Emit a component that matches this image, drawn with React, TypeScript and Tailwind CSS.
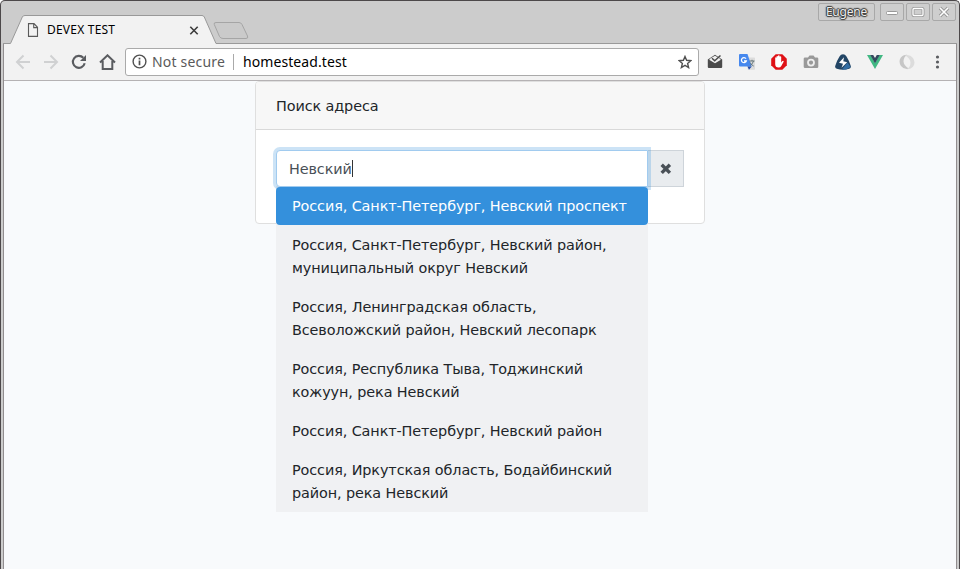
import React from 'react';

const suggestions = [
  ['Россия, Санкт-Петербург, Невский проспект'],
  ['Россия, Санкт-Петербург, Невский район,', 'муниципальный округ Невский'],
  ['Россия, Ленинградская область,', 'Всеволожский район, Невский лесопарк'],
  ['Россия, Республика Тыва, Тоджинский', 'кожуун, река Невский'],
  ['Россия, Санкт-Петербург, Невский район'],
  ['Россия, Иркутская область, Бодайбинский', 'район, река Невский'],
];

function WindowButton({ children }: { children: React.ReactNode }) {
  return (
    <div className="flex h-[18px] w-6 items-center justify-center rounded-[2px] border border-[#a8a8a8] bg-[#cecece]">
      {children}
    </div>
  );
}

function TitleBar() {
  return (
    <div className="relative flex h-[42px] items-start justify-between">
      <svg className="absolute left-0 top-0" width="958" height="43" viewBox="1 1 958 43" fill="none">
        <path d="M3 43.5H10.5L22.3 17Q23 15.5 25 15.5H202Q203.500 15.500 204.300 17L216 43.500H957V45H3Z" fill="#f2f2f2" />
        <path d="M3 43.500H10.500L22.300 17Q23 15.500 25 15.500H202Q203.500 15.500 204.300 17L216 43.500H957" stroke="#999" />
        <path d="M216 22.500H239Q241 22.500 242 24.500L247.500 36Q248.500 38.500 246 38.500H223Q220.500 38.500 219.500 36.500L214.300 24.500Q213.500 22.500 216 22.500Z" fill="#cacaca" stroke="#a5a5a5" />
      </svg>
      <div className="relative ml-[26px] mt-[19px] flex h-5 w-[175px] items-center">
        <svg width="12" height="14" viewBox="0 0 12 14" fill="none" stroke="#5a5a5a" strokeWidth="1.1">
          <path d="M1.500 .6H7L10.500 4.300V13.400H1.500ZM6.700 .6V4.600H10.500" />
        </svg>
        <span className="ml-2 text-[12px] tracking-[0.22px] text-black">DEVEX TEST</span>
        <svg className="ml-auto mr-[3px]" width="10" height="9" viewBox="0 0 10 9" stroke="#3c3c3c" strokeWidth="1.6">
          <path d="M1.300.8 8.700 8.200M8.700.8 1.300 8.200" />
        </svg>
      </div>
      <div className="relative mr-[3px] mt-[2px] flex gap-[2px]">
        <div className="mr-[3px] flex h-[18px] w-[57px] items-center justify-center rounded-[2px] border border-[#a8a8a8] bg-[#cecece] text-[12px] leading-none tracking-[-0.2px] text-[#eeeeee] [text-shadow:0_0_1px_#333,0_0_2px_#333,1px_0_1px_#444,-1px_0_1px_#444,0_1px_1px_#444,0_-1px_1px_#444]">
          Eugene
        </div>
        <WindowButton>
          <svg width="14" height="12" viewBox="0 0 14 12"><rect x="1.500" y="5.500" width="11" height="3" rx="1" fill="#fff" stroke="#999" /></svg>
        </WindowButton>
        <WindowButton>
          <svg width="14" height="12" viewBox="0 0 14 12" fill="none"><rect x="2" y="2.500" width="10" height="7" rx="1" stroke="#999" strokeWidth="3" /><rect x="2" y="2.500" width="10" height="7" rx="1" stroke="#fff" strokeWidth="1.3" /></svg>
        </WindowButton>
        <WindowButton>
          <svg width="14" height="12" viewBox="0 0 14 12" fill="none"><path d="m3 2 8 8m0-8-8 8" stroke="#999" strokeWidth="3.500" /><path d="m3 2 8 8m0-8-8 8" stroke="#fff" strokeWidth="1.600" /></svg>
        </WindowButton>
      </div>
    </div>
  );
}

function Arrow({ flip = false }: { flip?: boolean }) {
  return (
    <svg className={flip ? 'rotate-180' : ''} width="16" height="16" viewBox="0 0 16 16" fill="none" stroke="#d0d1d2" strokeWidth="2">
      <path d="M15 8H2.500M8.500 1.500 2 8l6.500 6.500" />
    </svg>
  );
}

function Extensions() {
  return (
    <div className="flex items-center gap-4">
      <svg width="16" height="16" viewBox="0 0 16 16">
        <path d="M.8 5.500 8 .7l7.200 4.800V13q0 1-1 1H1.800q-1 0-1-1Z" fill="#4b4b4b" />
        <path d="M2.500 6V5L8 1.800 13.500 5v1L8 9.300Z" fill="#f2f2f2" />
        <path d="m5 4.300 2.700 2.500L13.500 1.500" fill="none" stroke="#4b4b4b" strokeWidth="1.500" />
      </svg>
      <svg width="16" height="16" viewBox="0 0 16 16">
        <path d="M6 3.500h9.300q.7 0 .7.700V15q0 .7-.7.700H9Z" fill="#dcdcdc" />
        <path d="M0 1Q0 0 1 0h7.500l4.200 12.500H1q-1 0-1-1Z" fill="#4688ee" />
        <path d="M8.500 12.500h4.200L10 15.800Z" fill="#244dad" />
        <path d="M7 4.700a2.500 2.500 0 1 0 .3 2.300H5" fill="none" stroke="#fff" strokeWidth="1.300" />
        <path d="M10.500 7h5M13 5.800V7m1.500 0q-.8 3-3.200 4.500m-.3-3q1.500 2.500 3.700 3.600" fill="none" stroke="#66777b" />
      </svg>
      <svg width="16" height="16" viewBox="0 0 16 16">
        <path d="M4.700.2h6.600l4.500 4.500v6.600l-4.500 4.500H4.700L.2 11.300V4.700Z" fill="#df1116" />
        <path d="M4.200 8V4q0-.7.600-.7t.7.700V2.700q0-.8.700-.8t.8.800V2q0-.8.800-.8t.8.800v1q0-.8.800-.8t.8.800v5.600l1.200-1.500q.6-.6 1.100-.1.400.400 0 1L10.300 12q-.9 1.600-2.700 1.600-3.400 0-3.400-3.500Z" fill="#fff" />
      </svg>
      <svg width="16" height="16" viewBox="0 0 16 16">
        <path d="M2 3.500h3L6.500 1.500h4L12 3.500h2q1.300 0 1.300 1.300v8q0 1.300-1.300 1.300H2Q.7 14.100.7 12.800v-8Q.7 3.500 2 3.500Z" fill="#999" />
        <circle cx="8" cy="8.600" r="3" fill="#999" stroke="#eee" strokeWidth="1.800" />
      </svg>
      <svg width="16" height="16" viewBox="0 0 16 16">
        <path d="M8 .2q2.200 0 3.500 2.200Q14.500 7 15.800 12q.4 2-1.600 2.700Q8 16.900 1.800 14.700-.2 14 .2 12 1.500 7 4.500 2.400 5.800.2 8 .2Z" fill="#224565" />
        <path d="m12.500 8.500 3.100 4.500-4.600 2.500H7Z" fill="#326da3" />
        <path d="M9 3.200 4 8.700l4 1.100-1.500 4L12.200 8.300 8.300 7.200Z" fill="#fff" />
      </svg>
      <svg width="16" height="16" viewBox="0 0 16 16">
        <path d="M0 1h3.500L8 8.700 12.500 1H16L8 14.900Z" fill="#41b883" />
        <path d="M3.200 1h3L8 4l1.800-3h3L8 9.300Z" fill="#34495e" />
      </svg>
      <svg width="16" height="16" viewBox="0 0 16 16" fill="none">
        <path d="M10 14.800Q5 16 2 12 -.8 7.500 1.700 3.700 4 .5 8.300.7 4.500 3 4.500 7.500 4.700 11.500 10 14.800Z" fill="#c6c6c6" />
        <path d="M6 1.200Q11 0 14 4q2.800 4.500.3 8.300-2.300 3.200-6.600 3 3.800-2.300 3.800-6.800Q11.300 4.500 6 1.200Z" fill="#dcdcdc" />
      </svg>
    </div>
  );
}

function Toolbar() {
  return (
    <div className="flex h-[38px] items-center border-b border-[#b5b2b4] bg-[#f2f2f2] pl-[11px] pr-4">
      <div className="flex items-center gap-3">
        <Arrow />
        <Arrow flip />
        <svg width="16" height="16" viewBox="0 0 16 16" fill="none" stroke="#5a5c60" strokeWidth="2.100">
          <path d="M13.700 9.300A6 6 0 1 1 12.300 3.800" /><path d="M15 1v6H9Z" fill="#5a5c60" stroke="none" />
        </svg>
        <svg width="17" height="16" viewBox="0 0 17 16" fill="none" stroke="#5a5c60" strokeWidth="2">
          <path d="M1 8.500 8.500 1.300 16 8.500M3.700 7v8h9.600V7" />
        </svg>
      </div>
      <div className="ml-[9px] flex h-7 w-[574px] items-center rounded-[3px] border border-[#aaa] bg-white pl-[6px] pr-[6px] text-[14px]">
        <svg width="15" height="15" viewBox="0 0 15 15" fill="none" stroke="#505050">
          <circle cx="7.500" cy="7.500" r="6.400" strokeWidth="1.400" /><path d="M7.500 6.400v4.800M7.500 3.700v1.700" strokeWidth="1.700" />
        </svg>
        <span className="ml-[5px] w-[73px] whitespace-nowrap tracking-[0.18px] text-[#5a5a5a]">Not secure</span>
        <span className="ml-2 h-4 w-px bg-[#aaa]" />
        <span className="ml-[9px] tracking-[0.08px] text-black">homestead.test</span>
        <svg className="ml-auto" width="14" height="14" viewBox="0 0 14 14" fill="none" stroke="#505050" strokeWidth="1.400">
          <path d="m7 1.500 1.600 3.800 4.200.4-3.200 2.700 1 4.100L7 10.300l-3.600 2.200 1-4.100-3.200-2.700 4.200-.4Z" />
        </svg>
      </div>
      <div className="ml-2"><Extensions /></div>
      <svg className="ml-auto" width="5" height="14" viewBox="0 0 5 14" fill="#5a5c60">
        <circle cx="2.500" cy="2" r="1.600" /><circle cx="2.500" cy="7" r="1.600" /><circle cx="2.500" cy="12" r="1.600" />
      </svg>
    </div>
  );
}

function AddressSearch() {
  return (
    <div className="mx-auto h-[143px] w-[450px] rounded-[4px] border border-[#dfdfdf] bg-white font-['DejaVu_Sans',sans-serif] text-[14.4px] leading-[23.04px] tracking-[-0.1px] text-[#212529]">
      <div className="flex h-12 items-center rounded-t-[3px] border-b border-[#d9d9d9] bg-[#f7f7f7] px-5 pt-[2px]">Поиск адреса</div>
      <div className="px-5 pt-5">
        <div className="relative flex h-[37px]">
          <div className="order-2 flex w-9 shrink-0 items-center justify-center border border-l-0 border-[#ced4da] bg-[#e9ecef]">
            <svg width="12" height="12" viewBox="0 0 12 12" stroke="#495057" strokeWidth="3.400">
              <path d="m1.700 1.700 8.200 8.200m0-8.200-8.200 8.200" />
            </svg>
          </div>
          <div className="relative order-1 flex w-[372px] items-center rounded-l-[4px] border border-[#a1cbef] bg-white pl-3 text-[#495057] shadow-[0_0_0_3px_rgba(52,144,220,0.25)]">
            <span className="pt-[2px]">Невский</span><span className="h-[17px] w-px bg-[#333]" />
          </div>
          <ul className="absolute left-0 top-[36px] w-[372px] bg-[#f0f1f3]">
            {suggestions.map((lines, index) => (
              <li
                key={index}
                className={index === 0 ? 'mt-px rounded-[4px] bg-[#3490dc] px-4 pb-[7px] pt-2 text-white' : 'px-4 pb-[7px] pt-[9px]'}
              >
                {lines.map((line) => (
                  <span key={line} className="block h-[23px] whitespace-nowrap">{line}</span>
                ))}
              </li>
            ))}
          </ul>
        </div>
      </div>
    </div>
  );
}

export default function App() {
  return (
    <div className="h-[569px] w-[960px] overflow-hidden bg-white font-['Noto_Sans',sans-serif]">
      <div className="flex h-full flex-col rounded-t-[5px] border-x border-t border-[#4c484a] bg-[#cccccc]">
        <TitleBar />
        <div className="mx-[2px] flex flex-1 flex-col border-x border-[#918d8f] bg-[#f8fafc]">
          <Toolbar />
          <main className="flex-1">
            <AddressSearch />
          </main>
        </div>
      </div>
    </div>
  );
}
